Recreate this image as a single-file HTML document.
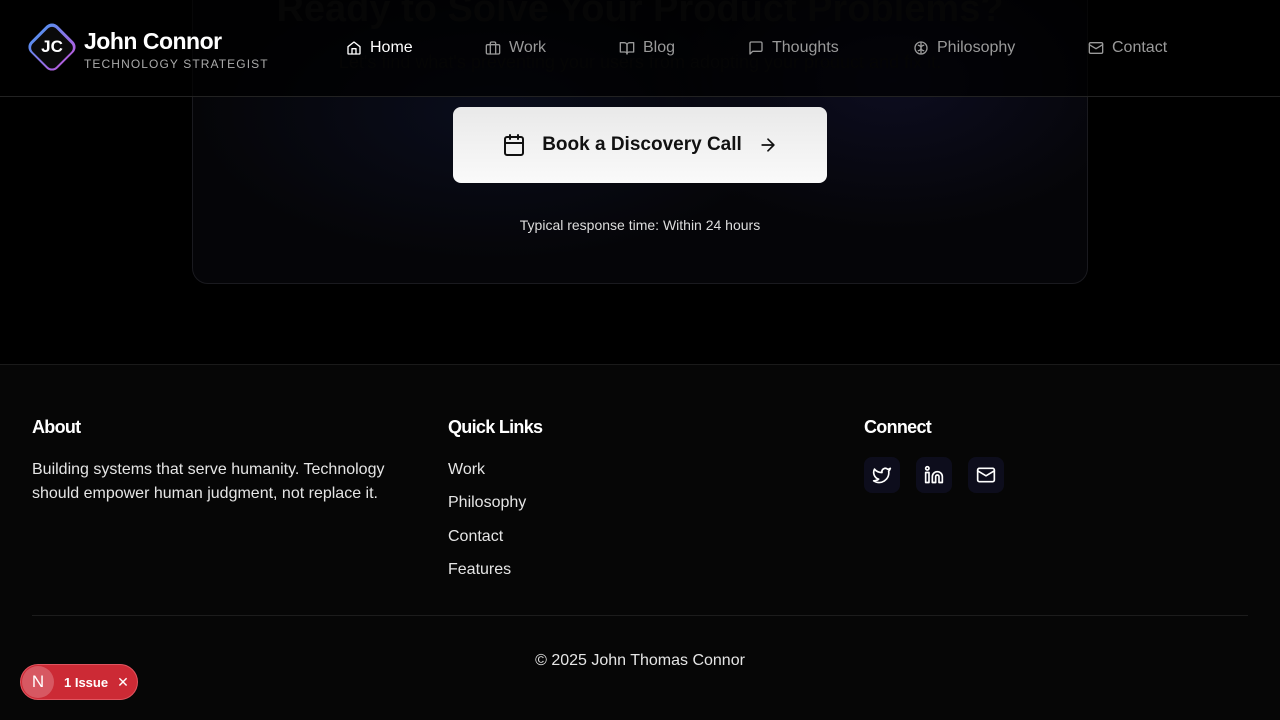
<!DOCTYPE html>
<html><head><style>
*{margin:0;padding:0;box-sizing:border-box}
body{width:1280px;height:720px;background:#000;font-family:"Liberation Sans",sans-serif;color:#fff;position:relative;overflow:hidden}
.card{position:absolute;left:192px;top:-60px;width:896px;height:344px;border:1px solid #1a1a1f;border-radius:16px;background:radial-gradient(ellipse 300px 150px at 300px 170px,#0a0d1c,transparent),radial-gradient(ellipse 250px 150px at 700px 140px,#0d0d20,transparent),#050508}
.h1{position:absolute;left:0;width:1280px;top:-12px;text-align:center;font-size:38px;font-weight:bold;color:#161616}
.sub{position:absolute;left:0;width:1280px;top:52px;text-align:center;font-size:18px;color:#131313}
header{position:absolute;top:0;left:0;width:1280px;height:97px;border-bottom:1px solid #222;background:rgba(0,0,0,0.72)}
.logo{position:absolute;left:33px;top:28px;width:38px;height:38px;transform:rotate(45deg);border-radius:8px;background:linear-gradient(90deg,#5b8def,#b060e0);padding:2.5px}
.logo div{width:100%;height:100%;background:#0a0a0a;border-radius:6px}
.jc{position:absolute;left:28px;top:37px;width:48px;text-align:center;font-weight:bold;font-size:17px}
.name{position:absolute;left:84px;top:28px;font-size:23px;font-weight:bold;letter-spacing:-0.5px}
.tag{position:absolute;left:84px;top:57px;font-size:12px;letter-spacing:1.1px;color:#aaa}
.nav{position:absolute;top:39px;font-size:16px;color:#9a9a9a;display:flex;align-items:center;gap:8px}
.nav svg{width:16px;height:16px;fill:none;stroke:currentColor;stroke-width:2;stroke-linecap:round;stroke-linejoin:round}
.btn{position:absolute;left:453px;top:107px;width:374px;height:76px;border-radius:8px;background:linear-gradient(#e9e9e9,#fafafa);color:#111;display:flex;align-items:center;justify-content:center;gap:16px;font-size:19px;font-weight:bold}
.btn svg{fill:none;stroke:#111;stroke-width:2;stroke-linecap:round;stroke-linejoin:round}
.resp{position:absolute;top:217px;width:1280px;text-align:center;font-size:14px;color:#ddd}
footer{position:absolute;top:364px;left:0;width:1280px;height:356px;background:#060606;border-top:1px solid #1a1a1a}
.fh{position:absolute;top:417px;font-size:18px;font-weight:bold;letter-spacing:-0.7px}
.ft{position:absolute;font-size:16px;color:#e5e5e5;line-height:24px}
.soc{position:absolute;top:457px;width:36px;height:36px;border-radius:8px;background:#0d0d1c;display:flex;align-items:center;justify-content:center}
.soc svg{width:20px;height:20px;fill:none;stroke:#fff;stroke-width:2;stroke-linecap:round;stroke-linejoin:round}
.hr{position:absolute;top:615px;left:32px;width:1216px;height:1px;background:#1c1c1c}
.badge{position:absolute;left:20px;top:664px;width:118px;height:36px;border-radius:18px;background:#cc2a35;border:1px solid #e05560;display:flex;align-items:center}
.badge .n{width:32px;height:32px;border-radius:16px;background:#d75862;margin-left:1px;display:flex;align-items:center;justify-content:center;font-size:17px}
</style></head><body>
<div class="card"></div>
<div class="h1">Ready to Solve Your Product Problems?</div>
<div class="sub">Let's find what's preventing your users from adopting your product and fix it.</div>
<header>
<div class="logo"><div></div></div><div class="jc">JC</div>
<div class="name">John Connor</div><div class="tag">TECHNOLOGY STRATEGIST</div>
<div class="nav" style="left:346px;color:#fff"><svg viewBox="0 0 24 24"><path d="M3 10l9-7 9 7v10a1 1 0 0 1-1 1H4a1 1 0 0 1-1-1z"/><path d="M9 21v-8h6v8"/></svg>Home</div>
<div class="nav" style="left:485px"><svg viewBox="0 0 24 24"><rect x="2" y="7" width="20" height="14" rx="2"/><path d="M16 21V5a2 2 0 0 0-2-2h-4a2 2 0 0 0-2 2v16"/></svg>Work</div>
<div class="nav" style="left:619px"><svg viewBox="0 0 24 24"><path d="M2 4h6a4 4 0 0 1 4 4v13a3 3 0 0 0-3-3H2z"/><path d="M22 4h-6a4 4 0 0 0-4 4v13a3 3 0 0 1 3-3h7z"/></svg>Blog</div>
<div class="nav" style="left:748px"><svg viewBox="0 0 24 24"><path d="M21 15a2 2 0 0 1-2 2H7l-4 4V5a2 2 0 0 1 2-2h14a2 2 0 0 1 2 2z"/></svg>Thoughts</div>
<div class="nav" style="left:913px"><svg viewBox="0 0 24 24"><circle cx="12" cy="12" r="9"/><path d="M12 3v18M8 8c2 0 4 2 4 4M16 8c-2 0-4 2-4 4M8 16c2 0 4-2 4-4M16 16c-2 0-4-2-4-4"/></svg>Philosophy</div>
<div class="nav" style="left:1088px"><svg viewBox="0 0 24 24"><rect x="2" y="4" width="20" height="16" rx="2"/><path d="M22 7l-10 6L2 7"/></svg>Contact</div>
</header>
<div class="btn"><svg width="24" height="24" viewBox="0 0 24 24"><rect x="3" y="4" width="18" height="18" rx="2"/><path d="M16 2v4M8 2v4M3 10h18"/></svg>Book a Discovery Call<svg width="20" height="20" viewBox="0 0 24 24"><path d="M5 12h14M12 5l7 7-7 7"/></svg></div>
<div class="resp">Typical response time: Within 24 hours</div>
<footer></footer>
<div class="fh" style="left:32px">About</div>
<div class="ft" style="left:32px;top:458px;width:380px">Building systems that serve humanity. Technology should empower human judgment, not replace it.</div>
<div class="fh" style="left:448px">Quick Links</div>
<div class="ft" style="left:448px;top:458px">Work</div>
<div class="ft" style="left:448px;top:491px">Philosophy</div>
<div class="ft" style="left:448px;top:525px">Contact</div>
<div class="ft" style="left:448px;top:558px">Features</div>
<div class="fh" style="left:864px">Connect</div>
<div class="soc" style="left:864px"><svg viewBox="0 0 24 24"><path d="M22 4s-.7 2.1-2 3.4c1.6 10-9.4 17.3-18 11.6 2.2.1 4.4-.6 6-2C3 15.5.5 9.6 3 5c2.2 2.6 5.6 4.1 9 4-.9-4.2 4-6.6 7-3.8 1.1 0 3-1.2 3-1.2z"/></svg></div>
<div class="soc" style="left:916px"><svg viewBox="0 0 24 24"><path d="M16 8a6 6 0 0 1 6 6v7h-4v-7a2 2 0 0 0-4 0v7h-4v-7a6 6 0 0 1 6-6z"/><rect x="2" y="9" width="4" height="12"/><circle cx="4" cy="4" r="2"/></svg></div>
<div class="soc" style="left:968px"><svg viewBox="0 0 24 24"><rect x="2" y="4" width="20" height="16" rx="2"/><path d="M22 7l-10 6L2 7"/></svg></div>
<div class="hr"></div>
<div class="ft" style="left:0;width:1280px;text-align:center;top:649px">© 2025 John Thomas Connor</div>
<div class="badge"><div class="n">N</div><span style="font-size:13px;font-weight:bold;margin-left:10px">1 Issue</span><span style="margin-left:9px;font-size:14px">✕</span></div>
</body></html>
